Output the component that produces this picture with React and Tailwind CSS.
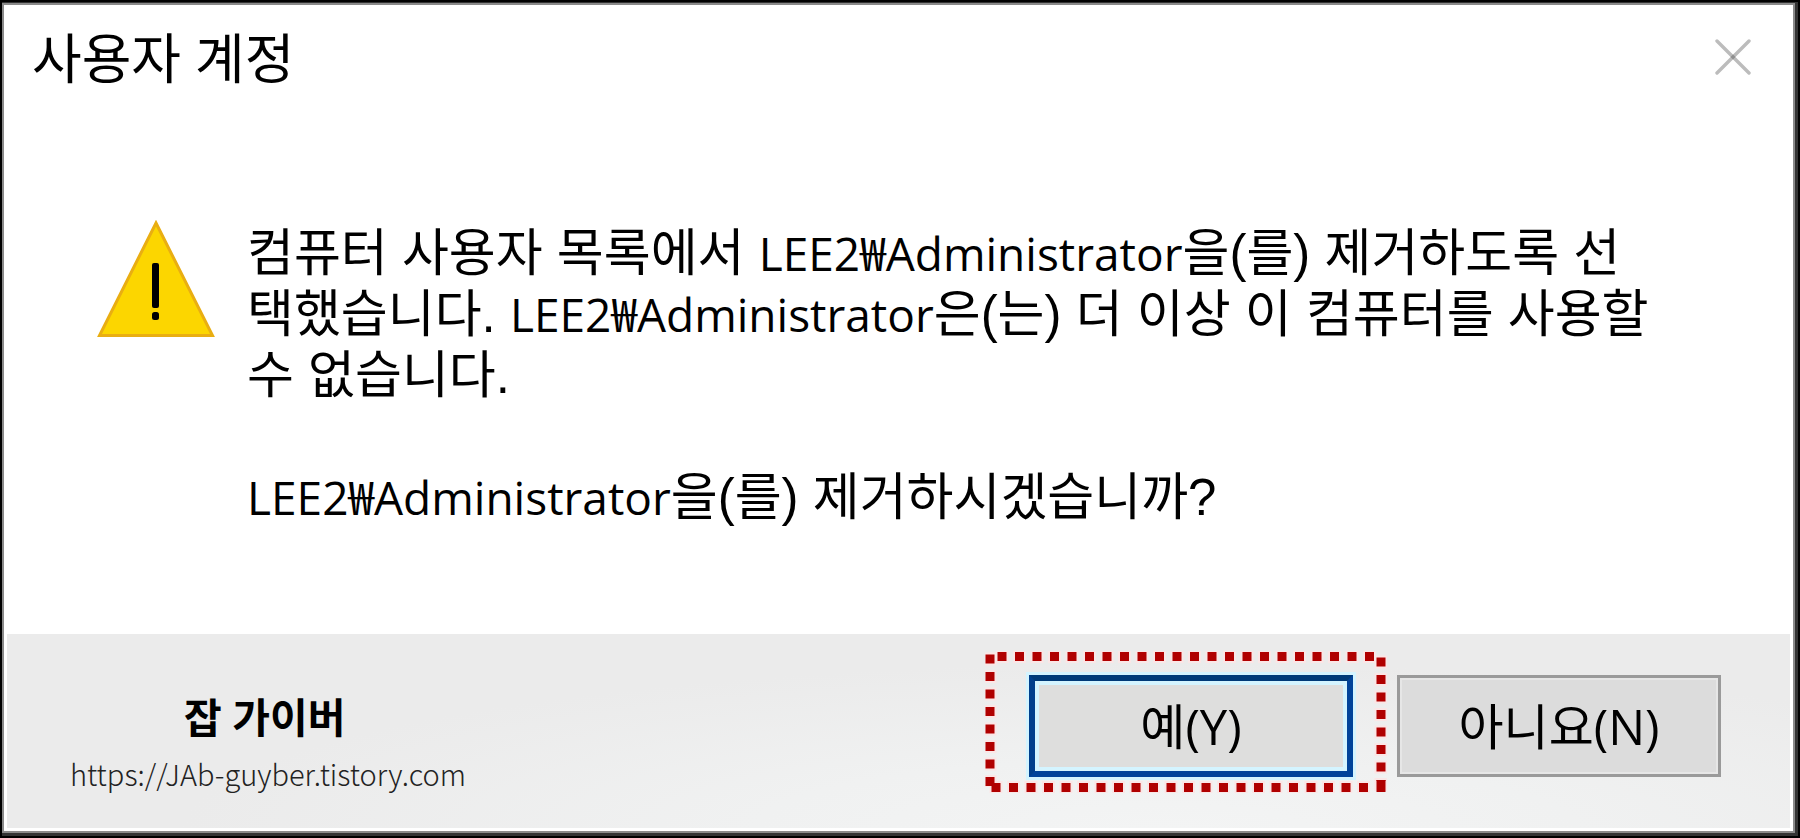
function Account() {
  return <span className="font-['Open_Sans','Noto_Sans_CJK_KR',sans-serif] text-[46px] leading-none">LEE2₩Administrator</span>;
}

function CloseIcon() {
  return (
    <svg viewBox="0 0 36 36" className="size-9" fill="none" aria-hidden="true">
      <path d="M2 2 34 34M34 2 2 34" stroke="#bcbcbc" strokeWidth="3.4" strokeLinecap="round" />
      <path d="M18 15.5 20.5 18 18 20.5 15.5 18z" fill="#8f8f8f" />
    </svg>
  );
}

function WarningIcon() {
  return (
    <svg viewBox="0 0 118 118" className="size-[118px] shrink-0" role="img" aria-label="경고">
      <path d="M59 3 115.500 115.500H2.500z" fill="#fcd600" stroke="#e9ae12" strokeWidth="3" strokeLinejoin="miter" />
      <rect x="55" y="43" width="7" height="45" rx="2" fill="#000" />
      <rect x="55" y="92" width="7" height="8" rx="2.500" fill="#000" />
    </svg>
  );
}

function DottedFrame() {
  return (
    <svg
      viewBox="0 0 402 142"
      className="pointer-events-none absolute -left-11 -top-6 h-[142px] w-[402px] max-w-none"
      fill="none"
      aria-hidden="true"
    >
      <g stroke="#fbe6e6" strokeWidth="13">
        <path d="M10.500 5.500H391" strokeDasharray="13 4.500" />
        <path d="M4.500 136.500H385" strokeDasharray="13 4.500" />
        <path d="M5 1.500V136" strokeDasharray="13 4.500" />
        <path d="M396 4.500V142" strokeDasharray="13 4.500" />
      </g>
      <g stroke="#b00000" strokeWidth="9">
        <path d="M12.500 5.500H391" strokeDasharray="9 8.500" />
        <path d="M6.500 136.500H385" strokeDasharray="9 8.500" />
        <path d="M5 3.500V136" strokeDasharray="9 8.500" />
        <path d="M396 6.500V130" strokeDasharray="9 8.500" />
        <path d="M396 129V141" />
      </g>
    </svg>
  );
}

export default function App() {
  return (
    <div className="flex min-h-screen bg-black p-[2px] font-['Open_Sans','Noto_Sans_CJK_KR',sans-serif] text-black">
      <div className="flex grow border-t border-r-[3px] border-b-[3px] border-[#333333]">
        <main className="flex grow flex-col border-2 border-[#8a8a8a] bg-white">
          <header className="flex items-start justify-between pt-5 pr-[42px] pl-7">
            <h1 className="text-[54px] leading-[66px]">사용자 계정</h1>
            <button type="button" aria-label="닫기" className="mt-[14px]">
              <CloseIcon />
            </button>
          </header>

          <section className="flex grow items-start pt-[129px] pl-[93px]">
            <WarningIcon />
            <div className="ml-8 pt-[3px] font-['Liberation_Sans','Noto_Sans_CJK_KR',sans-serif] text-[51px] leading-[61px] whitespace-nowrap">
              <p>컴퓨터 사용자 목록에서 <Account />을(를) 제거하도록 선</p>
              <p>택했습니다. <Account />은(는) 더 이상 이 컴퓨터를 사용할</p>
              <p>수 없습니다.</p>
              <p className="mt-[61px]">
                <Account />을(를) 제거하시겠습니까?
              </p>
            </div>
          </section>

          <footer className="mx-[3px] mb-[3px] flex h-[194px] items-start justify-between bg-[#ececec] bg-[radial-gradient(ellipse_at_65%_100%,#f3f4f4_0%,#f0f1f1_25%,#ebebeb_60%)] pt-[41px] pr-[69px] pl-[63px]">
            <div className="pt-[18px]">
              <p className="pl-[114px] text-[41px] leading-[48px] font-bold">잡 가이버</p>
              <a
                href="https://JAb-guyber.tistory.com"
                className="block pt-[14px] font-['Noto_Sans_CJK_KR',sans-serif] text-[29px] leading-9 font-light text-[#222222]"
              >
                https://JAb-guyber.tistory.com
              </a>
            </div>
            <div className="flex gap-11">
              <div className="relative">
                <button
                  type="button"
                  className="h-[102px] w-[324px] border-[6px] border-t-[#003a78] border-r-[#00439a] border-b-[#00439a] border-l-[#003f8c] bg-[#dededd] text-[49px] leading-[60px] shadow-[0_0_0_3px_#d4f4ff,inset_0_0_0_4px_#d4f4ff]"
                >
                  예(Y)
                </button>
                <DottedFrame />
              </div>
              <button
                type="button"
                className="h-[102px] w-[324px] border-[3px] border-[#9a9a9a] bg-[#dcdcdc] text-[49px] leading-[60px] shadow-[inset_0_0_0_2px_#e6e6e6]"
              >
                아니요(N)
              </button>
            </div>
          </footer>
        </main>
      </div>
    </div>
  );
}
